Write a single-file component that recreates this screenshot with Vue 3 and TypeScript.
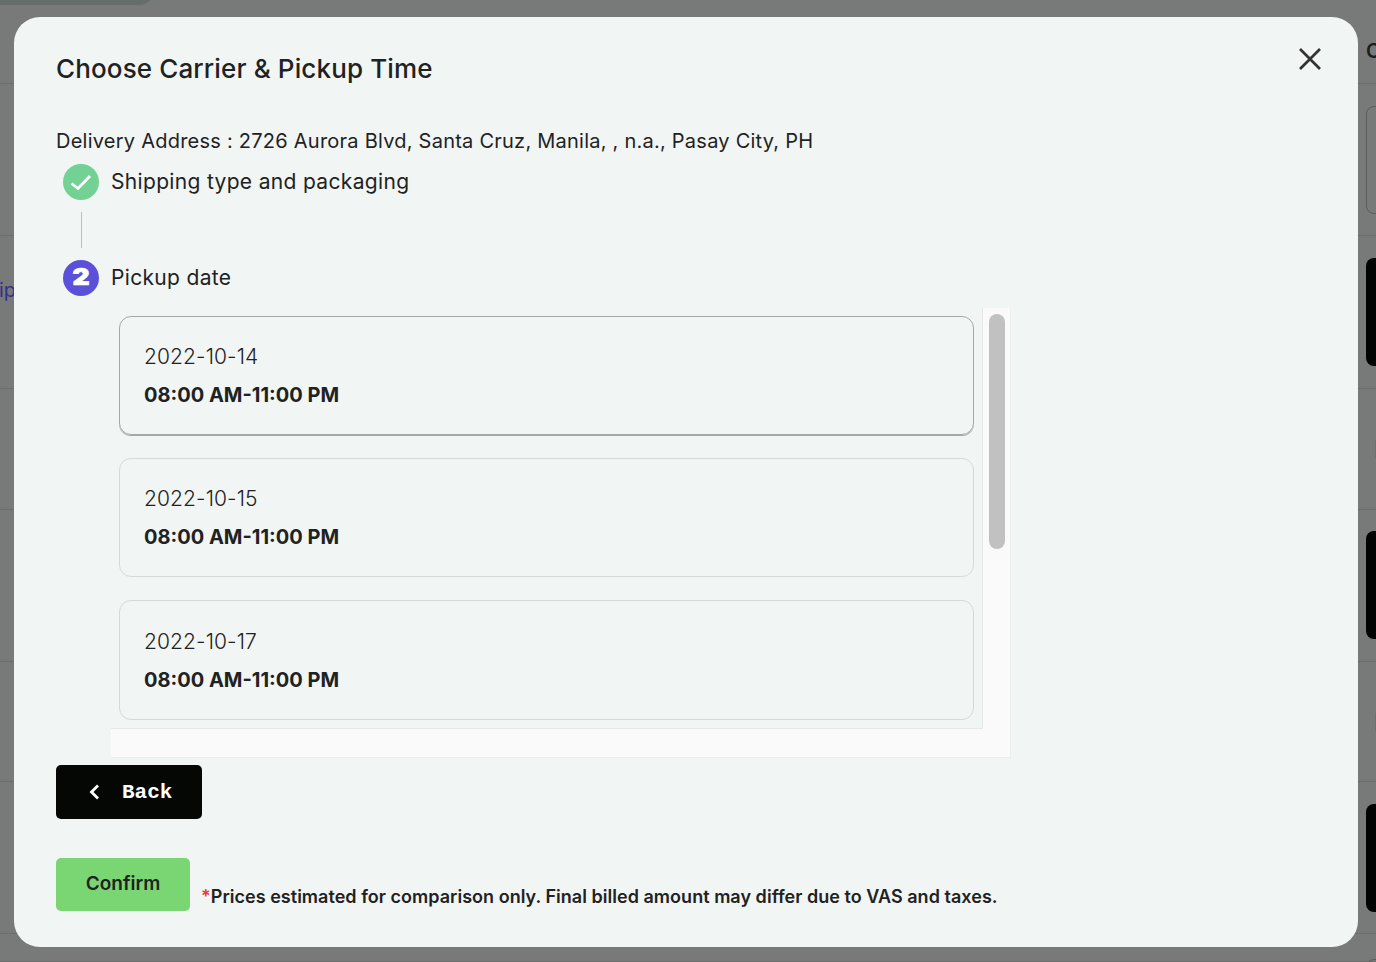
<template>
  <div class="page">
    <!-- dimmed table behind the modal -->
    <div class="pill"></div>
    <div
      v-for="(row, i) in rows"
      :key="i"
      class="row"
      :style="{ height: `${row.height}px` }"
    >
      <span v-if="row.kind === 'ship'" class="row-link">ip</span>
      <span v-if="row.kind === 'head'" class="row-head">C</span>
      <div v-if="row.kind === 'box'" class="row-box"></div>
      <div v-if="row.kind === 'ship'" class="row-btn"></div>
      <div v-if="row.kind === 'black'" class="row-btn"></div>
      <div v-if="row.kind === 'blackUp'" class="row-btn row-btn-up"></div>
      <div v-if="row.kind === 'mark'" class="row-mark"></div>
      <div v-if="row.kind === 'last'" class="row-box row-box-last"></div>
    </div>

    <div class="overlay">
      <div class="modal">
        <button class="close" aria-label="Close">
          <svg width="24" height="24" viewBox="0 0 24 24" fill="none">
            <path d="M2 2L22 22M22 2L2 22" stroke="#333" stroke-width="2.7" />
          </svg>
        </button>

        <h2 class="title">Choose Carrier &amp; Pickup Time</h2>
        <p class="address">Delivery Address : 2726 Aurora Blvd, Santa Cruz, Manila, , n.a., Pasay City, PH</p>

        <div class="step">
          <span class="dot dot-done">
            <svg width="24" height="24" viewBox="0 0 24 24" fill="none">
              <path d="M2.5 13.5L9 18.5L21 6" stroke="#fff" stroke-width="2.8" />
            </svg>
          </span>
          <span class="step-label">Shipping type and packaging</span>
        </div>
        <div class="connector"></div>
        <div class="step">
          <span class="dot dot-active"><span class="dot-num">2</span></span>
          <span class="step-label">Pickup date</span>
        </div>

        <div class="slots">
          <div class="slots-view">
            <div
              v-for="(slot, i) in slots"
              :key="slot"
              class="slot"
              :class="{ selected: i === 0 }"
            >
              <div class="slot-date">{{ slot }}</div>
              <div class="slot-time">08:00 AM-11:00 PM</div>
            </div>
          </div>
          <div class="slots-track">
            <div class="slots-thumb"></div>
          </div>
        </div>

        <button class="back">
          <svg width="12" height="16" viewBox="0 0 12 16" fill="none">
            <path d="M10 1.5L3.5 8L10 14.5" stroke="#fff" stroke-width="2.8" />
          </svg>
          <span>Back</span>
        </button>

        <div class="footer">
          <button class="confirm">Confirm</button>
          <p class="note"><span class="star">*</span>Prices estimated for comparison only. Final billed amount may differ due to VAS and taxes.</p>
        </div>
      </div>
    </div>
  </div>
</template>

<script setup lang="ts">
interface BgRow {
  height: number;
  kind: string;
}

const rows: BgRow[] = [
  { height: 84, kind: 'head' },
  { height: 152, kind: 'box' },
  { height: 153, kind: 'ship' },
  { height: 121, kind: 'mark' },
  { height: 152, kind: 'blackUp' },
  { height: 120, kind: 'mark' },
  { height: 152, kind: 'black' },
  { height: 28, kind: 'last' },
];

const slots = ['2022-10-14', '2022-10-15', '2022-10-17'];
</script>

<style>
html,
body {
  margin: 0;
  overflow: hidden;
}
</style>

<style scoped>
.page {
  position: relative;
  width: 1376px;
  height: 962px;
  overflow: hidden;
  background: #777a79;
  font-family: Inter, "Noto Sans", sans-serif;
  color: #1f2222;
}

.pill {
  position: absolute;
  left: -20px;
  top: -30px;
  width: 175px;
  height: 35px;
  border-radius: 0 0 16px 0;
  background: #656e6b;
}

.row {
  box-sizing: border-box;
  display: flex;
  align-items: center;
  justify-content: flex-end;
  border-bottom: 1px solid #6c6e6d;
}

.row:last-of-type {
  border-bottom: none;
}

.row-head {
  width: 16px;
  margin-right: -6px;
  margin-top: 18px;
  font-size: 20px;
  font-weight: 600;
  color: #1c1e1e;
}

.row-box {
  box-sizing: border-box;
  width: 30px;
  height: 108px;
  margin-right: -20px;
  border: 1px solid #5a5c5c;
  border-radius: 8px;
}

.row-box-last {
  align-self: flex-start;
  margin-top: 25px;
}

.row-btn {
  width: 30px;
  height: 108px;
  margin-right: -20px;
  border-radius: 8px;
  background: #020303;
}

.row-btn-up {
  margin-top: -2px;
}

.row-link {
  margin-right: auto;
  margin-left: -1px;
  margin-top: -44px;
  font-size: 20px;
  color: #37308a;
}

.row-mark {
  width: 1px;
  height: 18px;
  background: #7c6a6a;
}

.overlay {
  position: absolute;
  inset: 0;
}

.modal {
  position: absolute;
  left: 14px;
  top: 17px;
  box-sizing: border-box;
  width: 1344px;
  height: 930px;
  padding: 36px 42px 0;
  border-radius: 26px;
  background: #f1f5f4;
}

.close {
  position: absolute;
  top: 30px;
  right: 36px;
  width: 24px;
  height: 24px;
  padding: 0;
  border: none;
  background: none;
}

.close svg {
  display: block;
}

.title {
  margin: 0;
  font-size: 26px;
  line-height: 32px;
  font-weight: 500;
  letter-spacing: 0.13px;
}

.address {
  margin: 42px 0 0;
  font-size: 20px;
  line-height: 28px;
  font-weight: 400;
  letter-spacing: 0.24px;
}

.step {
  display: flex;
  align-items: center;
  gap: 12px;
  height: 36px;
  margin-left: 7px;
}

.address + .step {
  margin-top: 9px;
}

.step-label {
  font-size: 21px;
  line-height: 34px;
  margin-top: -1px;
  letter-spacing: 0.33px;
}

.dot {
  display: flex;
  align-items: center;
  justify-content: center;
  width: 36px;
  height: 36px;
  border-radius: 50%;
}

.dot-done {
  background: #72d193;
}

.dot-active {
  background: #5a50d9;
  color: #fff;
}

.dot-num {
  font-size: 22px;
  line-height: 24px;
  font-weight: 900;
  -webkit-text-stroke: 0.7px #fff;
  transform: translateY(-1px) scale(1.2, 1.05);
}

.connector {
  width: 1px;
  height: 36px;
  margin: 12px 0 12px 25px;
  background: #bcbebe;
}

.slots {
  box-sizing: border-box;
  display: flex;
  width: 900px;
  height: 450px;
  margin: 12px 0 0 55px;
  border-right: 1px solid #eceeee;
  border-bottom: 1px solid #eceeee;
  background: #fafafa;
}

.slots-view {
  box-sizing: border-box;
  width: 872px;
  height: 421px;
  padding: 8px 0 0 8px;
  overflow: hidden;
  border-right: 1px solid #e6e8e8;
  border-bottom: 1px solid #e6e8e8;
  background: #f1f5f4;
}

.slots-track {
  padding: 6px 0 0 6px;
}

.slots-thumb {
  width: 16px;
  height: 235px;
  border-radius: 8px;
  background: #c1c1c1;
}

.slot {
  box-sizing: border-box;
  width: 855px;
  height: 119.2px;
  margin-bottom: 23px;
  padding: 25.2px 24px 0;
  border: 1px solid #d6d9d9;
  border-radius: 12px;
}

.slot.selected {
  border-color: #a6a8a8;
  box-shadow: 0 1px 0 #a6a8a8;
}

.slot-date {
  font-size: 21px;
  line-height: 30px;
  font-weight: 300;
  letter-spacing: 0.1px;
}

.slot-time {
  margin-top: 8px;
  font-size: 20px;
  line-height: 30px;
  font-weight: 700;
}

.back {
  display: flex;
  align-items: center;
  gap: 22px;
  width: 146px;
  height: 54px;
  margin-top: 7px;
  padding: 0 0 0 32px;
  border: none;
  border-radius: 5px;
  background: #050705;
  color: #fff;
  font-family: "Liberation Mono", monospace;
  font-size: 21px;
  font-weight: 700;
}

.footer {
  display: flex;
  align-items: flex-end;
  gap: 11px;
  margin-top: 39px;
}

.confirm {
  width: 134px;
  height: 53px;
  padding: 0 0 3px;
  border: none;
  border-radius: 5px;
  background: #7ad672;
  color: #1f2222;
  font-family: Inter, "Noto Sans", sans-serif;
  font-size: 19px;
  font-weight: 600;
}

.note {
  margin: 0 0 3px;
  font-size: 18px;
  line-height: 22px;
  font-weight: 600;
  letter-spacing: 0.03px;
  white-space: nowrap;
}

.star {
  color: #f0392b;
}
</style>
